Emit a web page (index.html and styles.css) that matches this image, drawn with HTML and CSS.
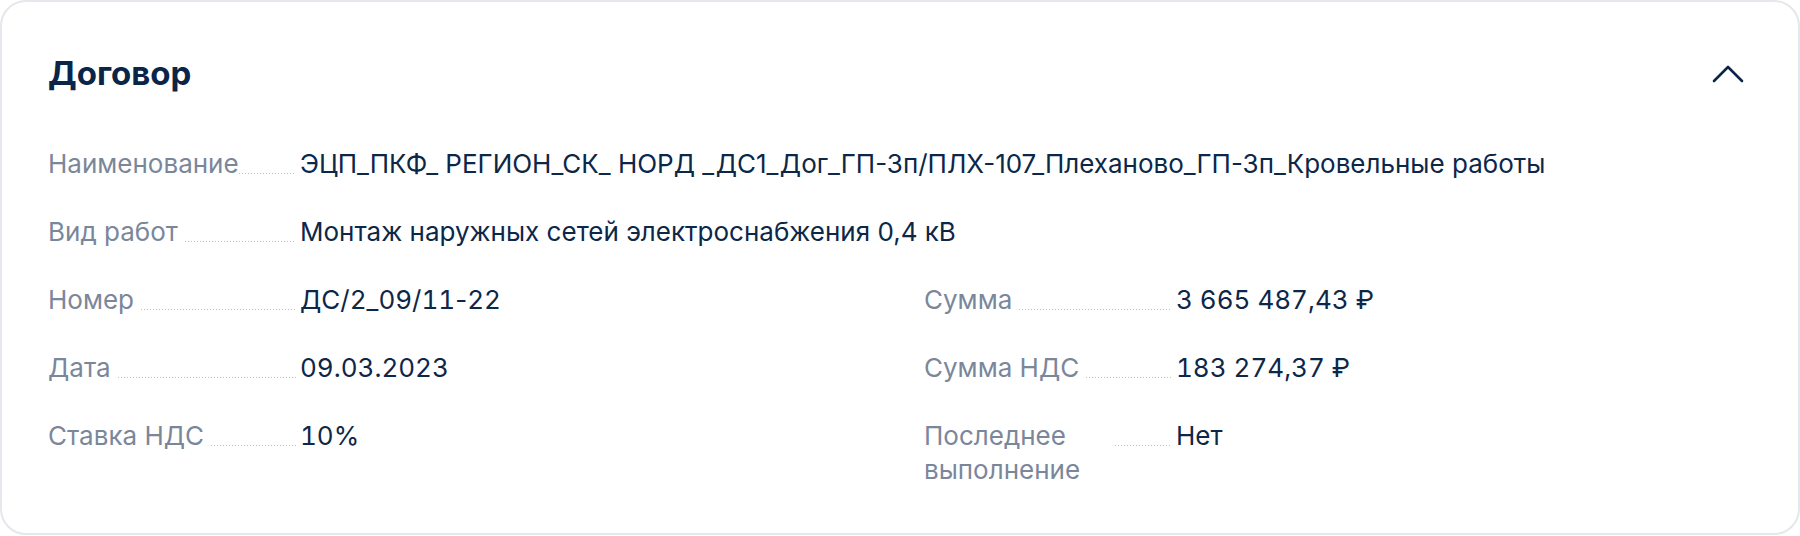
FILE: index.html
```html
<!DOCTYPE html>
<html lang="ru">
<head>
<meta charset="utf-8">
<link rel="stylesheet" href="styles.css">
</head>
<body>
<section class="card">
  <header class="card-head">
    <h2 class="card-title">Договор</h2>
    <button class="toggle" aria-label="Свернуть">
      <svg viewBox="0 0 32 32" width="32" height="32" fill="none" stroke="currentColor" stroke-width="2.6" stroke-linecap="round" stroke-linejoin="round"><path d="M2 24 L16 10 L30 24"/></svg>
    </button>
  </header>
  <dl class="fields">
    <div class="label"><dt>Наименование</dt><span class="dots"></span></div>
    <dd class="value wide">ЭЦП_ПКФ_ РЕГИОН_СК_ НОРД _ДС1_Дог_ГП-3п/ПЛХ-107_Плеханово_ГП-3п_Кровельные работы</dd>

    <div class="label"><dt>Вид работ</dt><span class="dots"></span></div>
    <dd class="value wide">Монтаж наружных сетей электроснабжения 0,4 кВ</dd>

    <div class="label"><dt>Номер</dt><span class="dots"></span></div>
    <dd class="value num">ДС/2_09/11<span class="plain">-</span>22</dd>
    <div class="label"><dt>Сумма</dt><span class="dots"></span></div>
    <dd class="value num">3 665 487,43 ₽</dd>

    <div class="label"><dt>Дата</dt><span class="dots"></span></div>
    <dd class="value num">09.03.2023</dd>
    <div class="label"><dt>Сумма НДС</dt><span class="dots"></span></div>
    <dd class="value num">183 274,37 ₽</dd>

    <div class="label"><dt>Ставка НДС</dt><span class="dots"></span></div>
    <dd class="value num">10<span class="plain">%</span></dd>
    <div class="label"><dt>Последнее выполнение</dt><span class="dots"></span></div>
    <dd class="value">Нет</dd>
  </dl>
</section>
</body>
</html>
```
FILE: styles.css
```css
html, body {
  margin: 0;
  padding: 0;
  background: #ffffff;
}
body {
  font-family: Inter, "Noto Sans", "Liberation Sans", sans-serif;
  -webkit-font-smoothing: antialiased;
}
.card {
  box-sizing: border-box;
  width: 1800px;
  height: 535px;
  border: 2px solid #e4e7eb;
  border-radius: 26px;
  background: #fff;
  padding: 49px 46px 0 46px;
}
.card-head {
  display: flex;
  align-items: center;
  justify-content: space-between;
  height: 44px;
}
.card-title {
  margin: 0;
  font-size: 33px;
  font-weight: 700;
  line-height: 44px;
  color: #0b2548;
  letter-spacing: 0;
}
.toggle {
  border: 0;
  background: none;
  padding: 0;
  margin-right: 8px;
  width: 32px;
  height: 32px;
  color: #0b2548;
  display: flex;
}
.fields {
  margin: 52px 0 0 0;
  display: grid;
  grid-template-columns: 252px 624px 252px 1fr;
  row-gap: 34px;
  font-size: 26px;
  line-height: 34px;
}
.label {
  display: flex;
  align-items: flex-start;
  padding-right: 4px;
}
.label dt {
  max-width: 74%;
  color: #7a879b;
}
.dots {
  flex: 1;
  height: 27px;
  margin-left: 7px;
  background-image: linear-gradient(to right, #b9c1cc 1px, transparent 1px);
  background-size: 3px 1px;
  background-repeat: repeat-x;
  background-position: left bottom;
}
.value {
  margin: 0;
  color: #0c2748;
}
.value.num {
  font-variant-numeric: tabular-nums;
}
.value .plain {
  font-variant-numeric: normal;
}
.value.wide {
  grid-column: 2 / 5;
}
```
